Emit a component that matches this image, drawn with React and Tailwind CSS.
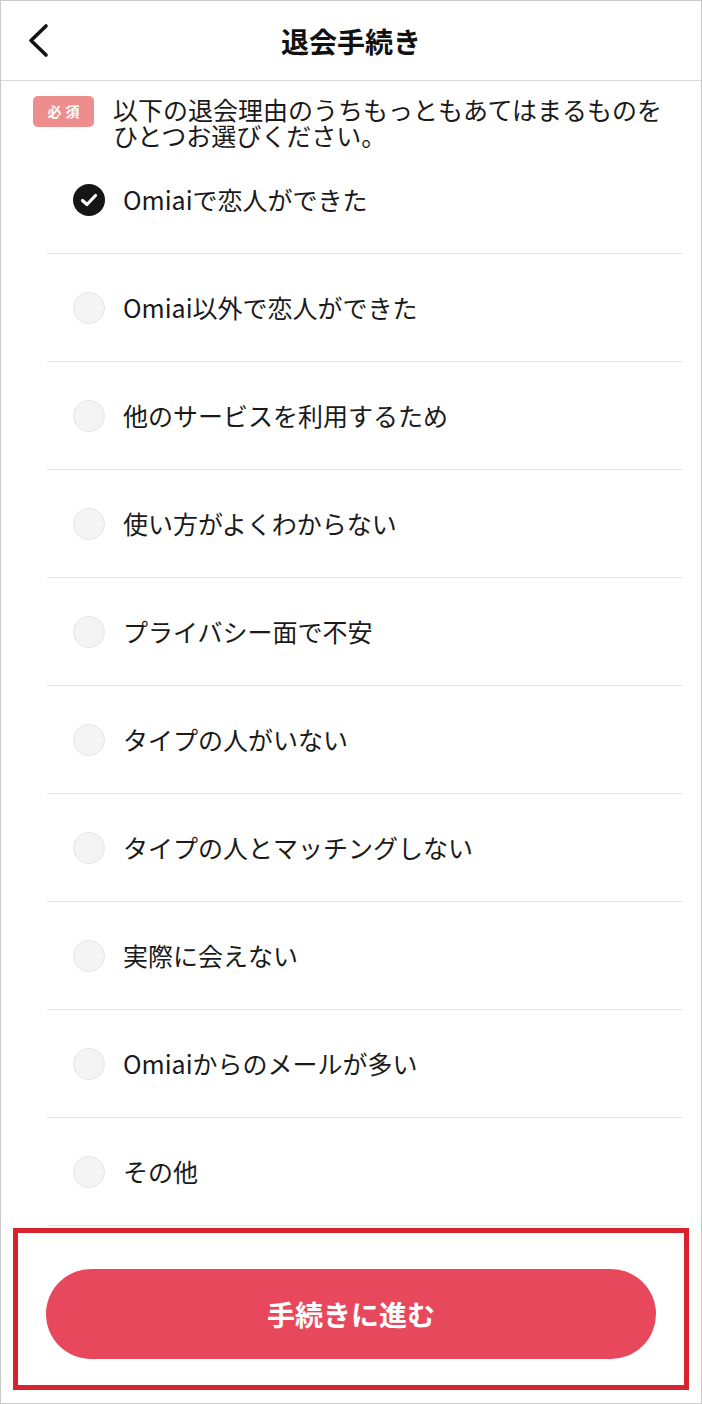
import React from 'react'

const reasons = [
  'Omiaiで恋人ができた',
  'Omiai以外で恋人ができた',
  '他のサービスを利用するため',
  '使い方がよくわからない',
  'プライバシー面で不安',
  'タイプの人がいない',
  'タイプの人とマッチングしない',
  '実際に会えない',
  'Omiaiからのメールが多い',
  'その他',
]

function Radio({ checked }) {
  if (checked) {
    return (
      <span className="w-[32px] h-[32px] rounded-full bg-[#161616] flex items-center justify-center shrink-0">
        <svg width="22" height="22" viewBox="0 0 22 22" fill="none">
          <path d="M4.5 11.5 L9 15.5 L17.5 6.5" stroke="#fff" strokeWidth="3.2" strokeLinecap="round" strokeLinejoin="round" />
        </svg>
      </span>
    )
  }
  return <span className="w-[32px] h-[32px] rounded-full bg-[#f4f4f4] border border-[#e4e4e4] shrink-0" />
}

function ReasonRow({ label, checked }) {
  return (
    <div className="h-[108px] border-b border-[#e6e6e6] flex items-center pl-[26px] gap-[18px]">
      <Radio checked={checked} />
      <span className="text-[25px] leading-none text-[#1a1a1a]">{label}</span>
    </div>
  )
}

export default function App() {
  return (
    <div
      className="w-[702px] h-[1404px] bg-white border border-[#c9c9c9] flex flex-col overflow-hidden"
      style={{ fontFamily: '"Noto Sans CJK JP", "Noto Sans", sans-serif' }}
    >
      {/* header */}
      <div className="h-[80px] shrink-0 border-b border-[#d9d9d9] grid grid-cols-[90px_1fr_90px] items-center">
        <div className="pl-[24px] flex items-center">
          <svg width="28" height="36" viewBox="0 0 28 36" fill="none">
            <path d="M21 3 L6 17.5 L21 32" stroke="#111" strokeWidth="3.6" strokeLinecap="round" strokeLinejoin="round" />
          </svg>
        </div>
        <h1 className="text-center text-[28px] font-bold text-[#111] leading-none">退会手続き</h1>
        <div />
      </div>

      {/* description */}
      <div className="h-[65px] shrink-0 flex items-start pt-[15px] pl-[32px] gap-[19px]">
        <span className="w-[61px] h-[31px] rounded-[5px] bg-[#ee8d8d] text-white text-[14px] font-bold tracking-[4px] flex items-center justify-center pl-[4px] shrink-0">
          必須
        </span>
        <p className="text-[25px] leading-[26px] text-[#1a1a1a] whitespace-nowrap">
          以下の退会理由のうちもっともあてはまるものを
          <br />
          ひとつお選びください。
        </p>
      </div>

      {/* reasons */}
      <div className="ml-[46px] w-[636px] flex flex-col">
        {reasons.map((r, i) => (
          <ReasonRow key={r} label={r} checked={i === 0} />
        ))}
      </div>

      {/* footer */}
      <div className="mt-[2px] ml-[12px] w-[676px] h-[162px] border-[5px] border-[#d8232e] pt-[36px] pl-[28px]">
        <button className="w-[610px] h-[90px] rounded-full bg-[#e8485c] text-white text-[28px] font-bold flex items-center justify-center">
          手続きに進む
        </button>
      </div>
    </div>
  )
}
